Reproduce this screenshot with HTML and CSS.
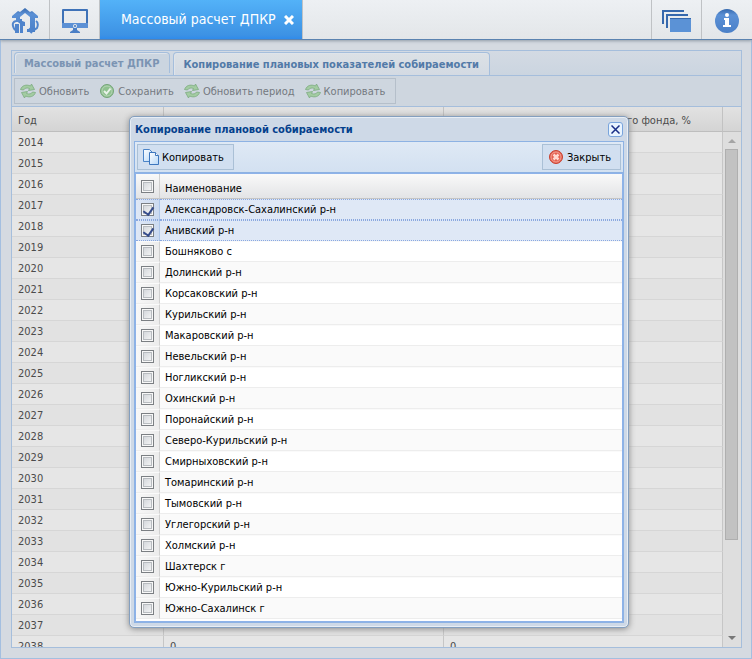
FILE: index.html
```html
<!DOCTYPE html>
<html lang="ru">
<head>
<meta charset="utf-8">
<title>Массовый расчет ДПКР</title>
<link rel="stylesheet" href="styles.css">
</head>
<body>
<svg class="defs" aria-hidden="true">
  <defs>
    <linearGradient id="blue" x1="0" y1="0" x2="0" y2="1"><stop offset="0" stop-color="#3568ad"/><stop offset=".25" stop-color="#5b90d5"/><stop offset="1" stop-color="#4a80c8"/></linearGradient>
    <linearGradient id="sheet" x1="0" y1="0" x2="1" y2="1"><stop offset="0" stop-color="#fff"/><stop offset="1" stop-color="#b5d7f8"/></linearGradient>
    <symbol id="refresh" viewBox="0 0 16 16">
      <path d="M.5 6.500C2 2.500 6 1 10.500 3L11.500 1L14.500 6.500L8.500 7.500L9.500 5.500C7 4.500 4.500 5 3.500 7Z" fill="#a3cca2" stroke="#7cab80" stroke-width=".8"/>
      <path d="M15.500 9.500C14 13.500 10 15 5.500 13L4.500 15L1.500 9.500L7.500 8.500L6.500 10.500C9 11.500 11.500 11 12.500 9Z" fill="#a3cca2" stroke="#7cab80" stroke-width=".8"/>
    </symbol>
  </defs>
</svg>
<header class="topbar">
  <button class="top-cell" aria-label="Главная">
    <svg width="28" height="26" viewBox="0 0 28 26">
      <path fill="url(#blue)" d="M1 8L7 3L9 4L14 0L19 4L21 3L27 8V10H24V24H16V21H19V9L14 5L9 9V14H5V10H1Z"/>
      <path fill="#4f84cc" d="M4 16H8V25H4ZM9 11H11V13L14 14V18H12V25H9Z"/>
      <path d="M5 13Q1 14 2 18T5 22M8 15Q9 13 12 15M25 13Q28 15 26 20Q23 23 18 22L21 19M18 22L21 25" fill="none" stroke="#4f84cc" stroke-width="2"/>
    </svg>
  </button>
  <button class="top-cell" aria-label="Рабочий стол">
    <svg width="26" height="24" viewBox="0 0 26 24">
      <path fill="#3e72b8" fill-rule="evenodd" d="M1 0H25Q26 0 26 1V18Q26 19 25 19H1Q0 19 0 18V1Q0 0 1 0ZM2 2V14H24V2Z"/>
      <path fill="#5b90d5" d="M0 14H26V18Q26 19 25 19H1Q0 19 0 18Z"/>
      <circle cx="13" cy="17" r="2" fill="#e7ebef"/><circle cx="13" cy="17" r="1" fill="#3e72b8"/>
      <path fill="#4a7fc6" d="M11 19H15V21L18 23V24H8V23L11 21Z"/>
    </svg>
  </button>
  <div class="app-tab"><span>Массовый расчет ДПКР</span>
    <button class="tab-close" aria-label="Закрыть вкладку"><svg width="10" height="10" viewBox="0 0 10 10"><path d="M1 1L9 9M9 1L1 9" stroke="#fff" stroke-width="3"/></svg></button>
  </div>
  <div class="top-space"></div>
  <button class="top-cell" aria-label="Окна">
    <svg width="30" height="24" viewBox="0 0 30 24"><path d="M1 15V2H22M5 19V6H26" fill="none" stroke="#3568ad" stroke-width="2"/><path d="M8 9H29V23H8Z" fill="#5b92d6"/><path d="M8 9.500H29" stroke="#3568ad"/></svg>
  </button>
  <button class="top-cell" aria-label="Информация">
    <svg width="24" height="24" viewBox="0 0 24 24"><circle cx="12" cy="12" r="12" fill="url(#blue)"/><circle cx="12" cy="6" r="2" fill="#fff"/><path d="M9 9H14V16H16V18H8V16H10V11H9Z" fill="#fff"/></svg>
  </button>
</header>

<main class="workspace">
  <section class="panel">
    <nav class="tabs">
      <button class="tab">Массовый расчет ДПКР</button>
      <button class="tab active">Копирование плановых показателей собираемости</button>
    </nav>
    <div class="toolbar">
      <div class="group">
        <button class="tool"><svg class="icon"><use href="#refresh"/></svg>Обновить</button>
        <button class="tool"><svg class="icon" viewBox="0 0 16 16"><circle cx="8" cy="8" r="6.500" fill="#8fc18f" stroke="#74a578"/><circle cx="8" cy="8" r="5" fill="none" stroke="#b5d4b6"/><path d="M5 8L7.500 10.500L11.500 5.500" fill="none" stroke="#e9f2e9" stroke-width="2"/></svg>Сохранить</button>
        <button class="tool"><svg class="icon"><use href="#refresh"/></svg>Обновить период</button>
        <button class="tool"><svg class="icon"><use href="#refresh"/></svg>Копировать</button>
      </div>
    </div>
    <div class="grid-area">
      <div class="grid-scroll">
        <table class="years">
          <colgroup><col class="c1"><col class="c2"><col class="c3"><col class="c4"></colgroup>
          <thead><tr><th>Год</th><th></th><th class="right">го фонда, %</th><th></th></tr></thead>
          <tbody id="years"></tbody>
        </table>
      </div>
      <div class="scrollbar" aria-hidden="true"><i class="up"></i><i class="thumb"></i><i class="down"></i></div>
    </div>
  </section>
</main>

<div class="overlay">
  <section class="dialog" role="dialog" aria-labelledby="dlg-title">
    <div class="dialog-head"><h2 id="dlg-title">Копирование плановой собираемости</h2>
      <button class="dialog-x" aria-label="Закрыть окно"><svg width="9" height="9" viewBox="0 0 9 9"><path d="M.5.5L8.500 8.500M8.500.5L.5 8.500" stroke="#182d86" stroke-width="1.500"/></svg></button>
    </div>
    <div class="dialog-body">
      <div class="dialog-tools">
        <button class="btn"><svg class="icon" viewBox="0 0 16 16"><path d="M.5.5H6.500L9.500 3.500V12.500H.5Z" fill="url(#sheet)" stroke="#4b84c8"/><path d="M6.500 3.500H12.500L15.500 6.500V15.500H6.500Z" fill="url(#sheet)" stroke="#3d76bd"/><path d="M12.500 3.500V6.500H15.500" fill="#fff" stroke="#3d76bd"/></svg>Копировать</button>
        <button class="btn"><svg class="icon" viewBox="0 0 16 16"><circle cx="8" cy="8" r="6.500" fill="#e5604f" stroke="#c8402f"/><circle cx="8" cy="8" r="5" fill="none" stroke="#f3a295"/><path d="M5.500 5.500L10.500 10.500M10.500 5.500L5.500 10.500" stroke="#ffd9d0" stroke-width="2.500"/></svg>Закрыть</button>
      </div>
      <table class="names">
        <thead><tr><th class="check"><input type="checkbox" aria-label="Выбрать все"></th><th>Наименование</th></tr></thead>
        <tbody id="names"></tbody>
      </table>
    </div>
  </section>
</div>
<script src="script.js"></script>
</body>
</html>
```
FILE: styles.css
```css
* { box-sizing: border-box; }
html, body { height: 100%; }
body {
  margin: 0;
  display: flex;
  flex-direction: column;
  position: relative;
  overflow: hidden;
  font: 11px/13px "DejaVu Sans Condensed", "DejaVu Sans", sans-serif;
  color: #000;
  background: #d5dae1;
}
button { font: inherit; color: inherit; margin: 0; padding: 0; border: 0; background: none; }
svg { display: block; flex: none; }
.defs { position: absolute; width: 0; height: 0; }
.icon { width: 16px; height: 16px; }

.topbar {
  display: flex;
  flex: none;
  height: 40px;
  padding-right: 1px;
  border-bottom: 1px solid #5b83b0;
  background: linear-gradient(#edf0f3, #e3e6e9);
  box-shadow: 0 1px 3px #8f9aa5;
  position: relative;
}
.top-cell {
  width: 50px;
  display: flex;
  align-items: center;
  justify-content: center;
  padding-top: 2px;
  border-right: 1px solid #bfc2c5;
}
.top-space ~ .top-cell { border-right: 0; border-left: 1px solid #bfc2c5; }
.top-space { flex: 1; border-left: 1px solid #bfc2c5; }
.app-tab {
  display: flex;
  align-items: center;
  gap: 8px;
  padding: 0 8px 0 21px;
  color: #fff;
  font-size: 14px;
  background: linear-gradient(#53b2f8, #3d92e4 90%, #2f8bec);
}

.workspace {
  flex: 1;
  min-height: 0;
  display: flex;
  padding: 10px 9px 10px 10px;
  border: 1px solid #a4bfe0;
  border-top: 0;
}
.panel {
  flex: 1;
  min-width: 0;
  display: flex;
  flex-direction: column;
  border: 1px solid #a5bedc;
}
.tabs {
  display: flex;
  flex: none;
  gap: 3px;
  height: 25px;
  padding: 1px 2px 0;
  border-bottom: 1px solid #a5bedc;
  background: linear-gradient(#d3dae3, #cbd5e0);
}
.tab {
  height: 21px;
  padding: 0 10px 0 9px;
  border: 1px solid #a5bedc;
  border-bottom: 0;
  border-radius: 4px 4px 0 0;
  box-shadow: inset 1px 1px #dfe4ea;
  color: #7b94b3;
  font-weight: bold;
  background: #cbd5e0;
}
.tab.active { height: 23px; color: #527aa8; background: linear-gradient(#dce1e6, #d3dae3); }
.toolbar { flex: none; padding: 2px; height: 31px; border-bottom: 1px solid #a5bedc; background: #ced6df; }
.group {
  display: inline-flex;
  align-items: center;
  gap: 10px;
  height: 26px;
  padding: 0 10px 0 5px;
  border: 1px solid #b5bfca;
}
.tool { display: flex; align-items: center; gap: 3px; color: #747980; white-space: nowrap; }

.grid-area { flex: 1; min-height: 0; display: flex; position: relative; background: #e1e1e1; }
.grid-scroll { flex: 1; overflow: hidden; }
table { border-collapse: separate; border-spacing: 0; table-layout: fixed; width: 100%; }
th { font-weight: normal; text-align: left; }
.years { color: #4b4b4b; }
.c1 { width: 152px; }
.c2 { width: 280px; }
.c4 { width: 18px; }
.years th {
  height: 25px;
  padding: 3px 6px 0;
  border-right: 1px solid #c2c2c2;
  border-bottom: 1px solid #bebebe;
  background: linear-gradient(#e2e2e2, #d4d4d4);
}
.years th:last-child { border-right: 0; }
.years th.right { text-align: right; padding-right: 31px; }
.years td {
  height: 21px;
  padding: 0 6px;
  border-right: 1px solid #c6c6c6;
  border-bottom: 1px solid #d6d6d6;
  background: #e6e6e6;
}
.years tr:nth-child(even) td { background: #e2e2e2; }
.years td:last-child { border: 0; }
.scrollbar {
  position: absolute;
  inset: 25px 0 0 auto;
  width: 18px;
  padding-right: 1px;
  display: flex;
  flex-direction: column;
  align-items: center;
  background: #dedede;
}
.scrollbar i { display: block; }
.up { margin: 7px 0 6px; border: 4px solid transparent; border-top: 0; border-bottom-color: #a5a5a5; }
.thumb { width: 13px; flex: 1; max-height: 76%; background: #c2c2c2; border: 1px solid #afafaf; }
.down { margin: auto 0 7px; border: 4px solid transparent; border-bottom: 0; border-top-color: #777; }

.overlay {
  position: absolute;
  inset: 0;
  display: flex;
  align-items: flex-start;
  justify-content: center;
  padding: 116px 0 0 6px;
}
.dialog {
  width: 500px;
  padding: 0 4px 4px;
  border: 1px solid #849fbf;
  border-radius: 5px;
  background: #ced9e7;
  box-shadow: inset 0 0 0 1px #e8eef5, 0 1px 6px #888;
}
.dialog-head { display: flex; align-items: center; justify-content: space-between; height: 24px; padding: 0 1px; }
.dialog-head h2 { margin: 0; font-size: 11px; color: #04408c; }
.dialog-x {
  width: 15px;
  height: 15px;
  display: flex;
  align-items: center;
  justify-content: center;
  border: 1px solid #79a4dc;
  border-radius: 3px;
  background: #e8f4ff;
}
.dialog-body { border: 1px solid #8db2e3; background: #fff; }
.dialog-tools {
  display: flex;
  justify-content: space-between;
  padding: 2px;
  height: 31px;
  border-bottom: 1px solid #8db2e3;
  background: linear-gradient(#dfe9f5, #d3e1f1);
}
.btn {
  display: flex;
  align-items: center;
  gap: 3px;
  height: 26px;
  padding: 0 9px 0 5px;
  border: 1px solid #aac0d6;
  background: #d1dff0;
}
.names { border: 1px solid #8db2e9; padding-bottom: 2px; }
.names th {
  height: 25px;
  padding: 4px 5px 0;
  border-bottom: 1px solid #c5c5c5;
  background: linear-gradient(#f9f9f9, #e3e4e6);
}
.names th.check { padding: 0 5px; }
.names .check { width: 24px; border-right: 1px solid #d0d0d0; }
.names td {
  height: 21px;
  padding: 0 5px;
  border-top: 1px solid #fafafa;
  border-bottom: 1px solid #ededed;
}
.names td.check { background: linear-gradient(90deg, #f8f8f8, #ececec); }
.names tr:nth-child(even) td:last-child { background: #fafafa; }
.names tr.selected td,
.names tr.selected:nth-child(even) td:last-child {
  border-top: 1px dotted #8aa8e0;
  border-bottom: 1px dotted #8aa8e0;
  background: #dfe8f6;
}
.names tr.selected td.check { border-right-color: #aec7ea; background: linear-gradient(90deg, #dfe8f6, #cbdaf0); }
input[type="checkbox"] {
  appearance: none;
  display: block;
  width: 13px;
  height: 13px;
  margin: 0;
  border: 1px solid #7b7f83;
  background: linear-gradient(135deg, #cdd1d6, #fafafa);
  box-shadow: inset 0 0 0 1px #f8f8f8, inset 0 0 0 2px #b8bcc0;
}
input[type="checkbox"]:checked::before {
  content: "";
  display: block;
  width: 5px;
  height: 8px;
  margin: 1px 3px;
  border: solid #354c8c;
  border-width: 0 2px 2px 0;
  transform: rotate(35deg);
}
```
FILE: script.js
```js
const names = ["Александровск-Сахалинский р-н", "Анивский р-н", "Бошняково с", "Долинский р-н", "Корсаковский р-н", "Курильский р-н", "Макаровский р-н", "Невельский р-н", "Ногликский р-н", "Охинский р-н", "Поронайский р-н", "Северо-Курильский р-н", "Смирныховский р-н", "Томаринский р-н", "Тымовский р-н", "Углегорский р-н", "Холмский р-н", "Шахтерск г", "Южно-Курильский р-н", "Южно-Сахалинск г"];
document.getElementById("names").innerHTML = names.map((n, i) =>
  `<tr class="${i < 2 ? "selected" : ""}"><td class="check"><input type="checkbox" id="n${i}" ${i < 2 ? "checked" : ""}></td><td><label for="n${i}">${n}</label></td></tr>`).join("");
let rows = "";
for (let y = 2014; y <= 2038; y++) {
  const v = y === 2038 ? "0" : "";
  rows += `<tr><td>${y}</td><td>${v}</td><td>${v}</td><td></td></tr>`;
}
document.getElementById("years").innerHTML = rows;
```
